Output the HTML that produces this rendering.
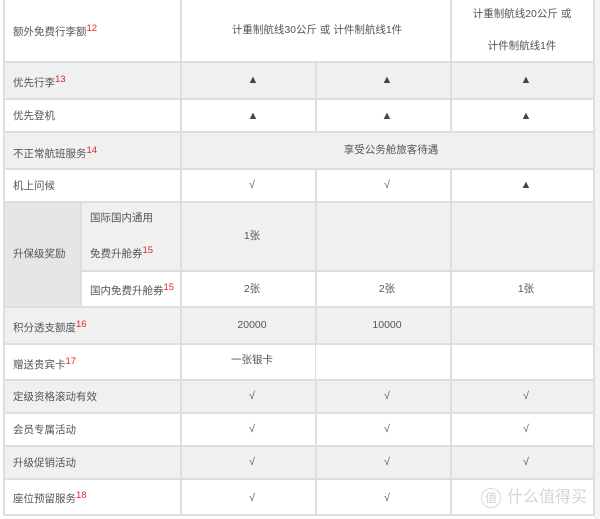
<!DOCTYPE html>
<html><head><meta charset="utf-8"><style>
body{margin:0;width:600px;height:519px;background:#fff;position:relative;overflow:hidden;font-family:"Liberation Sans","Noto Sans CJK SC",sans-serif;font-size:10.5px;color:#555}
.b{position:absolute}
.h{position:absolute;height:2px;background:#dedede}
.v{position:absolute;width:2px;background:#dedede}
.t{position:absolute;white-space:nowrap;line-height:14px}
.c{transform:translateX(-50%)}
sup{color:#e0242a;font-size:9.5px;vertical-align:4px;line-height:0}
.tri{font-size:11px;color:#444}
</style></head><body>
<div class="b" style="left:4px;top:62px;width:590px;height:37px;background:#f0f0f0"></div>
<div class="b" style="left:4px;top:132px;width:590px;height:37px;background:#f0f0f0"></div>
<div class="b" style="left:4px;top:201px;width:590px;height:70px;background:#f0f0f0"></div>
<div class="b" style="left:4px;top:201px;width:77px;height:106px;background:#e6e6e6"></div>
<div class="b" style="left:4px;top:307px;width:590px;height:37px;background:#f0f0f0"></div>
<div class="b" style="left:4px;top:380px;width:590px;height:33px;background:#f0f0f0"></div>
<div class="b" style="left:4px;top:446px;width:590px;height:33px;background:#f0f0f0"></div>
<div class="b" style="left:594px;top:0;width:6px;height:519px;background:#f3f3f3"></div>
<div class="h" style="left:4px;top:61px;width:590px"></div>
<div class="h" style="left:4px;top:98px;width:590px"></div>
<div class="h" style="left:4px;top:131px;width:590px"></div>
<div class="h" style="left:4px;top:168px;width:590px"></div>
<div class="h" style="left:4px;top:201px;width:590px"></div>
<div class="h" style="left:81px;top:270px;width:513px"></div>
<div class="h" style="left:4px;top:306px;width:590px"></div>
<div class="h" style="left:4px;top:343px;width:590px"></div>
<div class="h" style="left:4px;top:379px;width:590px"></div>
<div class="h" style="left:4px;top:412px;width:590px"></div>
<div class="h" style="left:4px;top:445px;width:590px"></div>
<div class="h" style="left:4px;top:478px;width:590px"></div>
<div class="h" style="left:4px;top:514px;width:590px"></div>
<div class="v" style="left:3px;top:0;height:516px"></div>
<div class="v" style="left:180px;top:0;height:516px"></div>
<div class="v" style="left:315px;top:62px;height:70px"></div>
<div class="v" style="left:315px;top:168px;height:176px"></div>
<div class="v" style="left:315px;top:380px;height:136px"></div>
<div class="b" style="left:315px;top:344px;width:1px;height:36px;background:#dedede"></div>
<div class="v" style="left:450px;top:0;height:132px"></div>
<div class="v" style="left:450px;top:168px;height:348px"></div>
<div class="v" style="left:80px;top:201px;height:106px"></div>
<div class="v" style="left:593px;top:0;height:516px"></div>
<div class="t" style="left:13px;top:25px">额外免费行李额<sup>12</sup></div>
<div class="t" style="left:13px;top:76px">优先行李<sup>13</sup></div>
<div class="t" style="left:13px;top:109px">优先登机</div>
<div class="t" style="left:13px;top:147px">不正常航班服务<sup>14</sup></div>
<div class="t" style="left:13px;top:179px">机上问候</div>
<div class="t" style="left:13px;top:247px">升保级奖励</div>
<div class="t" style="left:90px;top:211px">国际国内通用</div>
<div class="t" style="left:90px;top:247px">免费升舱券<sup>15</sup></div>
<div class="t" style="left:90px;top:284px">国内免费升舱券<sup>15</sup></div>
<div class="t" style="left:13px;top:321px">积分透支额度<sup>16</sup></div>
<div class="t" style="left:13px;top:358px">赠送贵宾卡<sup>17</sup></div>
<div class="t" style="left:13px;top:390px">定级资格滚动有效</div>
<div class="t" style="left:13px;top:423px">会员专属活动</div>
<div class="t" style="left:13px;top:456px">升级促销活动</div>
<div class="t" style="left:13px;top:492px">座位预留服务<sup>18</sup></div>
<div class="t c" style="left:317px;top:23px">计重制航线30公斤 或 计件制航线1件</div>
<div class="t c" style="left:522px;top:7px">计重制航线20公斤 或</div>
<div class="t c" style="left:522px;top:39px">计件制航线1件</div>
<div class="t c tri" style="left:253px;top:73px">▲</div>
<div class="t c tri" style="left:387px;top:73px">▲</div>
<div class="t c tri" style="left:526px;top:73px">▲</div>
<div class="t c tri" style="left:253px;top:109px">▲</div>
<div class="t c tri" style="left:387px;top:109px">▲</div>
<div class="t c tri" style="left:526px;top:109px">▲</div>
<div class="t c" style="left:391px;top:143px">享受公务舱旅客待遇</div>
<div class="t c" style="left:252px;top:178px">√</div>
<div class="t c" style="left:387px;top:178px">√</div>
<div class="t c tri" style="left:526px;top:178px">▲</div>
<div class="t c" style="left:252px;top:229px">1张</div>
<div class="t c" style="left:252px;top:282px">2张</div>
<div class="t c" style="left:387px;top:282px">2张</div>
<div class="t c" style="left:526px;top:282px">1张</div>
<div class="t c" style="left:252px;top:318px">20000</div>
<div class="t c" style="left:387px;top:318px">10000</div>
<div class="t c" style="left:252px;top:353px">一张银卡</div>
<div class="t c" style="left:252px;top:389px">√</div>
<div class="t c" style="left:387px;top:389px">√</div>
<div class="t c" style="left:526px;top:389px">√</div>
<div class="t c" style="left:252px;top:422px">√</div>
<div class="t c" style="left:387px;top:422px">√</div>
<div class="t c" style="left:526px;top:422px">√</div>
<div class="t c" style="left:252px;top:455px">√</div>
<div class="t c" style="left:387px;top:455px">√</div>
<div class="t c" style="left:526px;top:455px">√</div>
<div class="t c" style="left:252px;top:491px">√</div>
<div class="t c" style="left:387px;top:491px">√</div>
<div class="b" style="left:481px;top:488px;width:18px;height:18px;border:1.5px solid #d8d8d8;border-radius:50%;color:#d0d0d0;font-size:12px;line-height:18px;text-align:center">值</div>
<div class="t" style="left:507px;top:487px;font-size:16px;line-height:22px;color:#d5d5d5">什么值得买</div>
</body></html>
